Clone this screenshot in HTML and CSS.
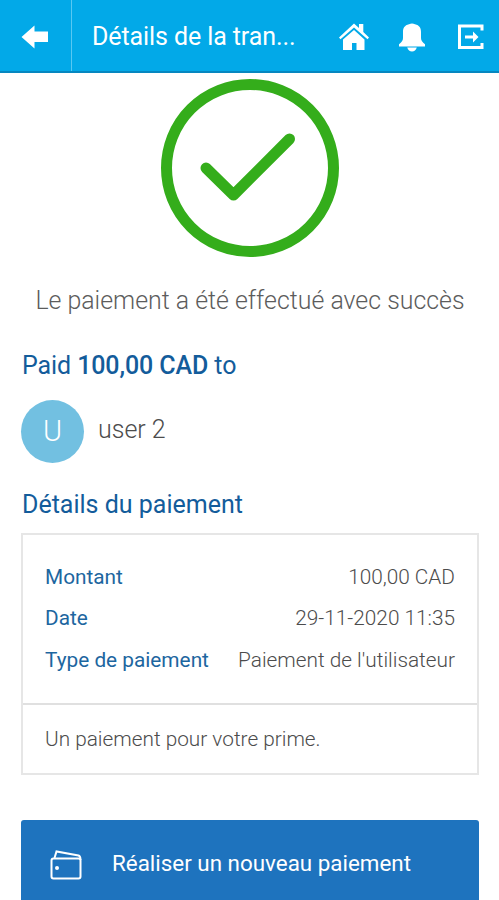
FILE: index.html
```html
<!DOCTYPE html>
<html lang="fr">
<head>
  <meta charset="UTF-8" />
  <meta name="viewport" content="width=device-width, initial-scale=1.0"/>
  <title>Détails de la transaction</title>
  <link rel="stylesheet" href="styles.css">
</head>
<body>

  <header class="topbar">
    <a class="back" href="#" aria-label="Retour">
      <svg width="28" height="24" viewBox="0 0 28 24"><path d="M0.5 12 L13.5 0.5 V6.5 H27 V17 H13.5 V23.5 Z"/></svg>
    </a>
    <h1>Détails de la tran...</h1>
    <nav class="actions">
      <a href="#" aria-label="Accueil">
        <svg width="32" height="28" viewBox="0 0 32 28">
          <path d="M16 7 L26.5 16.5 V27 H18.5 V20 H14 V27 H5 V16.5 Z"/>
          <path d="M16 0.5 L21 5 V1 H25.3 V9 L31 14.5 L29.5 16.3 L16 4.5 L2.5 16.3 L1 14.5 Z"/>
        </svg>
      </a>
      <a href="#" aria-label="Notifications">
        <svg width="28" height="29" viewBox="0 0 28 29">
          <path d="M11 1.2 Q14 -0.2 17 1.2 C21.5 2.3 23 5 23 9 V15 Q23 18.5 27 21.3 V23.5 H1 V21.3 Q5 18.5 5 15 V9 C5 5 6.5 2.3 11 1.2 Z"/>
          <path d="M9.2 24.5 H18.8 Q17.5 28.5 14 28.5 Q10.5 28.5 9.2 24.5 Z"/>
        </svg>
      </a>
      <a class="logout" href="#" aria-label="Déconnexion">
        <svg width="27" height="26" viewBox="0 0 27 26">
          <path class="line" d="M25 6.5 V2 H2.5 V23.5 H25 V19"/>
          <path d="M8 11.5 H16 V7.5 L21.5 13 L16 18.5 V14.5 H8 Z"/>
        </svg>
      </a>
    </nav>
  </header>

  <main class="content">
    <section class="success">
      <svg class="check" width="178" height="178" viewBox="0 0 178 178">
        <circle cx="89" cy="89" r="83.5"/>
        <path d="M45 89 L72.5 116 L128.5 60"/>
      </svg>
      <p>Le paiement a été effectué avec succès</p>
    </section>

    <h2 class="paid">Paid <strong>100,00 CAD</strong> to</h2>
    <div class="user">
      <span class="avatar">U</span>
      <span class="name">user 2</span>
    </div>

    <h2 class="details-title">Détails du paiement</h2>
    <div class="card">
      <dl class="details">
        <div class="row"><dt>Montant</dt><dd>100,00 CAD</dd></div>
        <div class="row"><dt>Date</dt><dd>29-11-2020 11:35</dd></div>
        <div class="row"><dt>Type de paiement</dt><dd>Paiement de l'utilisateur</dd></div>
      </dl>
      <p class="note">Un paiement pour votre prime.</p>
    </div>

    <button class="new-payment">
      <svg width="32" height="30" viewBox="0 0 32 30">
        <rect x="1.5" y="8.5" width="29" height="20" rx="2"/>
        <path d="M4.5 8 L6.5 1.5 L28.5 5.5 Q30.5 6 30.5 10"/>
        <circle class="dot" cx="7" cy="18" r="2"/>
      </svg>
      <span>Réaliser un nouveau paiement</span>
    </button>
  </main>

</body>
</html>
```

FILE: styles.css
```css
* {
  box-sizing: border-box;
}

body {
  margin: 0;
  font-family: Roboto, sans-serif;
  font-weight: 300;
  background: #fff;
  color: #4c4c4c;
  height: 100vh;
  overflow: hidden;
}

h1, h2, p, dl, dd {
  margin: 0;
}

.topbar {
  display: flex;
  height: 73px;
  background: #02a9e8;
  border-bottom: 2px solid #0687c0;
  color: #fff;
}

.topbar svg {
  display: block;
  fill: #fff;
}

.back {
  display: flex;
  align-items: center;
  justify-content: center;
  width: 72px;
  padding: 2px 2px 0 0;
  border-right: 1px solid #58c8f2;
}

.topbar h1 {
  width: 226px;
  padding-left: 20px;
  font-size: 25px;
  font-weight: 400;
  letter-spacing: -0.1px;
  line-height: 73px;
  white-space: nowrap;
}

.actions {
  display: flex;
  align-items: center;
  gap: 28px;
  margin-left: 40px;
  padding-top: 3px;
}

.actions .logout {
  margin-left: 3px;
}

.actions .line {
  fill: none;
  stroke: #fff;
  stroke-width: 3;
}

.content {
  padding: 6px 20px 0 21px;
}

.success {
  text-align: center;
}

.check {
  display: block;
  margin: 0 auto;
  fill: none;
  stroke: #34ad1b;
  stroke-width: 11;
  stroke-linecap: round;
  stroke-linejoin: round;
}

.success p {
  margin-top: 29px;
  font-size: 24.9px;
  line-height: 30px;
  color: #5c5c5c;
  white-space: nowrap;
}

.paid,
.details-title {
  font-size: 25px;
  font-weight: 400;
  line-height: 30px;
  color: #135c9b;
}

.paid {
  margin-top: 35px;
  padding-left: 1px;
  letter-spacing: -0.1px;
}

.paid strong {
  font-weight: 500;
}

.user {
  display: flex;
  align-items: center;
  gap: 14px;
  margin-top: 19px;
}

.avatar {
  width: 63px;
  height: 63px;
  border-radius: 50%;
  background: #72c0e1;
  color: #fff;
  font-size: 29px;
  line-height: 62px;
  text-align: center;
}

.name {
  padding-bottom: 4px;
  font-size: 25px;
  line-height: 30px;
}

.details-title {
  margin-top: 27px;
  padding-left: 1px;
}

.card {
  margin-top: 13px;
  border: 2px solid #e6e6e6;
  font-size: 20.8px;
}

.details {
  height: 168px;
  padding: 21.5px 22px 0;
  line-height: 41.6px;
}

.row {
  display: flex;
  justify-content: space-between;
}

.row dt {
  font-weight: 400;
  color: #1d669f;
}

.note {
  height: 70px;
  padding-left: 22px;
  border-top: 2px solid #e0e0e0;
  line-height: 68px;
}

.new-payment {
  display: flex;
  align-items: center;
  gap: 30px;
  width: 100%;
  height: 90px;
  margin-top: 45px;
  padding: 0 0 5px 29px;
  border: 0;
  border-radius: 3px;
  background: #1e73be;
  color: #fff;
  font-family: inherit;
  font-size: 22.4px;
}

.new-payment svg {
  margin-top: 5px;
  fill: none;
  stroke: #fff;
  stroke-width: 2;
}

.new-payment .dot {
  fill: #fff;
  stroke: none;
}
```
